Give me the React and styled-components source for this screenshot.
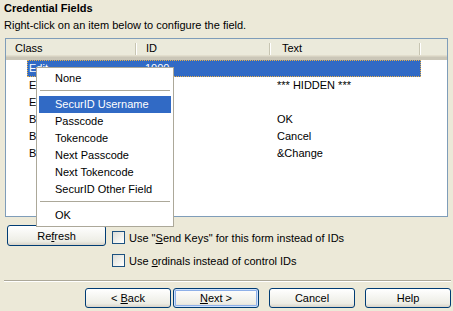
import React from "react";
import styled, { createGlobalStyle, css } from "styled-components";

const Global = createGlobalStyle`
  html, body { margin: 0; padding: 0; background: #ECE9D8; }
  body { font-family: "Liberation Sans", Arial, sans-serif; font-size: 11px; color: #000; }
  * { box-sizing: border-box; }
`;

const Page = styled.div`
  position: relative;
  width: 453px;
  height: 311px;
  padding: 2px 2px 0 4px;
  background: #ECE9D8;
  overflow: hidden;
  display: flex;
  flex-direction: column;
`;

const Title = styled.div`
  font-weight: bold;
  line-height: 13px;
  height: 13px;
`;

const Subtitle = styled.div`
  margin-top: 4px;
  line-height: 13px;
  height: 13px;
`;

const ListView = styled.div`
  margin: 6px 0 0 1px;
  width: 443px;
  height: 179px;
  border: 1px solid #7F9DB9;
  background: #fff;
  display: flex;
  flex-direction: column;
`;

const Header = styled.div`
  display: flex;
  height: 21px;
  background: #EBEADB;
  border-bottom: 3px solid #CBC7B8;
  box-shadow: inset 0 -1px 0 #D6D2C2, inset 0 -2px 0 #E2DECD;
  flex-shrink: 0;
`;

const HeadCell = styled.div`
  position: relative;
  width: ${(p) => p.$w}px;
  padding-left: ${(p) => p.$pad}px;
  line-height: 18px;
  ${(p) =>
    p.$divider &&
    css`
      &::after {
        content: "";
        position: absolute;
        right: 0;
        top: 4px;
        height: 12px;
        width: 1px;
        background: #C7C5B2;
        box-shadow: 1px 0 0 #fff;
      }
    `}
`;

const Rows = styled.div`
  display: flex;
  flex-direction: column;
`;

const Row = styled.div`
  display: flex;
  height: 17px;
  line-height: 17px;
  padding-left: 21px;
`;

const RowBody = styled.div`
  display: flex;
  width: 394px;
  ${(p) =>
    p.$selected &&
    css`
      background: #316AC5;
      color: #fff;
      outline: 1px dotted #E8B04A;
      outline-offset: -1px;
    `}
`;

const Cell = styled.div`
  width: ${(p) => p.$w}px;
  padding-left: ${(p) => p.$pad}px;
  white-space: nowrap;
  overflow: hidden;
`;

const Menu = styled.div`
  position: absolute;
  left: 36px;
  top: 67px;
  width: 138px;
  border: 1px solid #ACA899;
  background: #fff;
  padding: 2px;
  display: flex;
  flex-direction: column;
`;

const MenuItem = styled.div`
  height: 17px;
  line-height: 17px;
  padding-left: 16px;
  white-space: nowrap;
  ${(p) =>
    p.$active &&
    css`
      background: #316AC5;
      color: #fff;
    `}
`;

const MenuSep = styled.div`
  height: 9px;
  padding-top: 3px;
  margin: 0 1px;
  &::before {
    content: "";
    display: block;
    height: 1px;
    background: #ACA899;
  }
`;

const OptionsRow = styled.div`
  display: flex;
  margin-top: 8px;
  align-items: flex-start;
`;

const Button = styled.button`
  font: inherit;
  color: #000;
  width: ${(p) => p.$w || 86}px;
  height: ${(p) => p.$h || 20}px;
  padding: 0;
  border: 1px solid #003C74;
  border-radius: 3px;
  background: linear-gradient(#FFFFFF 0%, #F6F6F2 40%, #EDEDE5 80%, #D8D3C8 100%);
  text-align: center;
  line-height: 16px;
  ${(p) =>
    p.$default &&
    css`
      box-shadow: inset 0 0 0 1px #CEE1FC, inset 0 0 0 2px #8EB0E8;
    `}
`;

const RefreshButton = styled(Button)`
  margin-left: 3px;
`;

const Checks = styled.div`
  display: flex;
  flex-direction: column;
  gap: 6px;
  margin: 4px 0 0 6px;
`;

const CheckRow = styled.label`
  display: flex;
  align-items: center;
  height: 17px;
  gap: 4px;
  white-space: nowrap;
`;

const Box = styled.span`
  width: 13px;
  height: 13px;
  border: 1px solid #1C5180;
  background: linear-gradient(135deg, #DCDCD7 0%, #F2F2EE 60%, #FFFFFF 100%);
`;

const Separator = styled.div`
  margin-top: 11px;
  height: 2px;
  border-top: 1px solid #ACA899;
  border-bottom: 1px solid #FFFFFF;
  width: 447px;
`;

const ButtonBar = styled.div`
  display: flex;
  margin: 6px 0 0 81px;
`;

const Gap = styled.div`
  width: ${(p) => p.$w}px;
`;

const rows = [
  { cls: "Edit", id: "1000", text: "", selected: true },
  { cls: "Edit", id: "1001", text: "*** HIDDEN ***" },
  { cls: "Edit", id: "1002", text: "" },
  { cls: "Button", id: "1", text: "OK" },
  { cls: "Button", id: "2", text: "Cancel" },
  { cls: "Button", id: "1003", text: "&Change" },
];

export default function App() {
  return (
    <>
      <Global />
      <Page>
        <Title>Credential Fields</Title>
        <Subtitle>Right-click on an item below to configure the field.</Subtitle>
        <ListView>
          <Header>
            <HeadCell $w={130} $pad={9} $divider>Class</HeadCell>
            <HeadCell $w={134} $pad={10} $divider>ID</HeadCell>
            <HeadCell $w={150} $pad={12} $divider>Text</HeadCell>
          </Header>
          <Rows>
            {rows.map((r, i) => (
              <Row key={i}>
                <RowBody $selected={r.selected}>
                  <Cell $w={109} $pad={2}>{r.cls}</Cell>
                  <Cell $w={134} $pad={9}>{r.id}</Cell>
                  <Cell $w={151} $pad={7}>{r.text}</Cell>
                </RowBody>
              </Row>
            ))}
          </Rows>
        </ListView>
        <OptionsRow>
          <RefreshButton $w={99} $h={21}>Re<u>f</u>resh</RefreshButton>
          <Checks>
            <CheckRow>
              <Box />
              <span>Use "<u>S</u>end Keys" for this form instead of IDs</span>
            </CheckRow>
            <CheckRow>
              <Box />
              <span>Use <u>o</u>rdinals instead of control IDs</span>
            </CheckRow>
          </Checks>
        </OptionsRow>
        <Separator />
        <ButtonBar>
          <Button>&lt; <u>B</u>ack</Button>
          <Gap $w={2} />
          <Button $default><u>N</u>ext &gt;</Button>
          <Gap $w={10} />
          <Button>Cancel</Button>
          <Gap $w={10} />
          <Button>Help</Button>
        </ButtonBar>
        <Menu>
          <MenuItem>None</MenuItem>
          <MenuSep />
          <MenuItem $active>SecurID Username</MenuItem>
          <MenuItem>Passcode</MenuItem>
          <MenuItem>Tokencode</MenuItem>
          <MenuItem>Next Passcode</MenuItem>
          <MenuItem>Next Tokencode</MenuItem>
          <MenuItem>SecurID Other Field</MenuItem>
          <MenuSep />
          <MenuItem>OK</MenuItem>
        </Menu>
      </Page>
    </>
  );
}
